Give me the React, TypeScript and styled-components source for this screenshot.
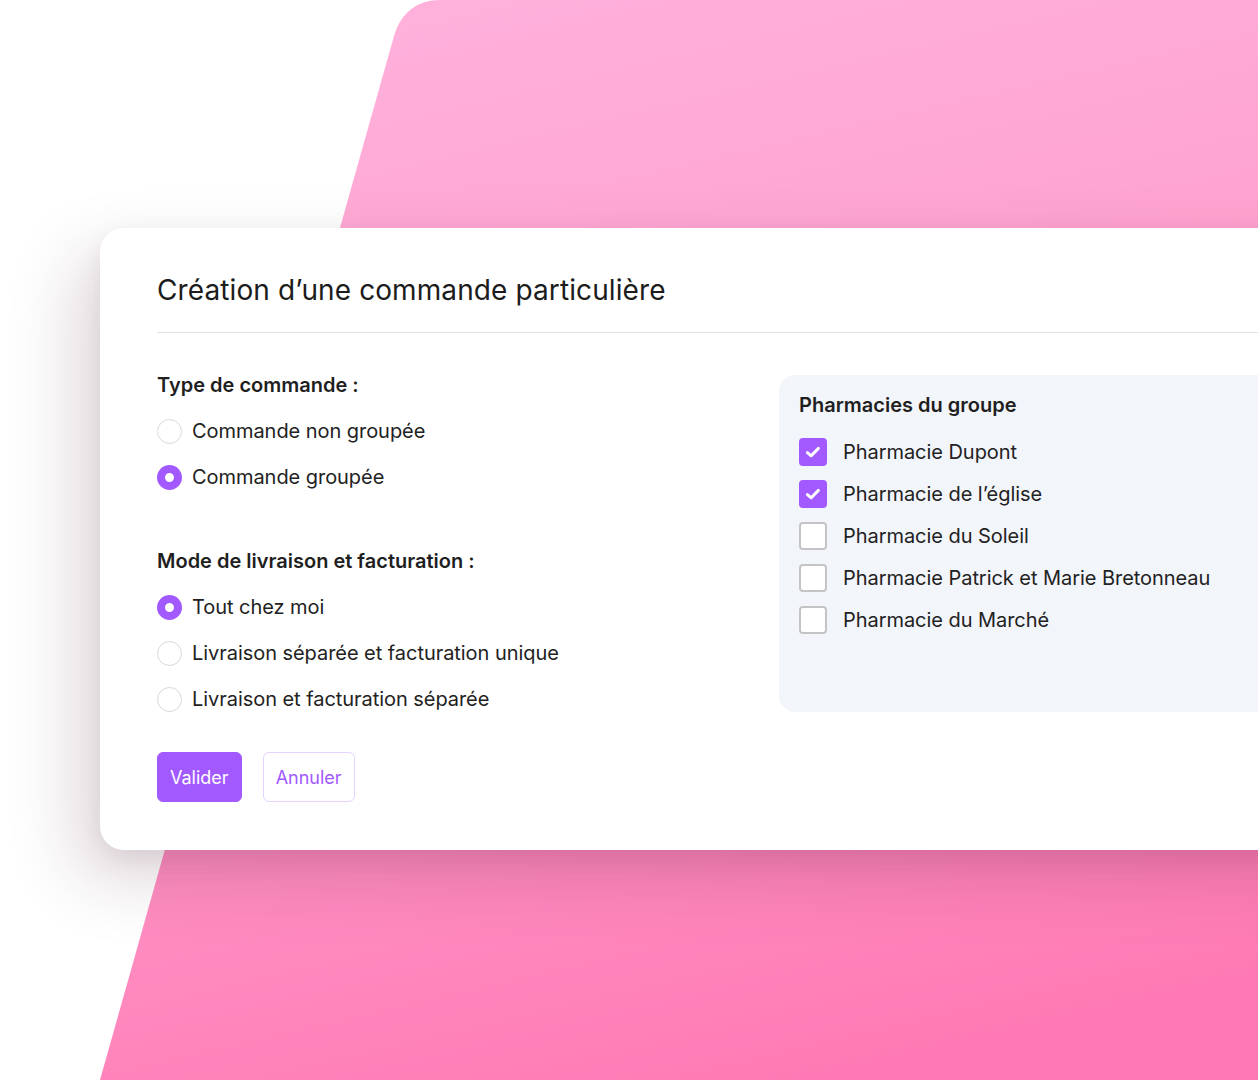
import * as React from 'react';
import styled, { createGlobalStyle } from 'styled-components';

const GlobalStyle = createGlobalStyle`
  html, body {
    margin: 0;
    padding: 0;
    background: #ffffff;
  }
  body {
    font-family: Inter, "Noto Sans", "Liberation Sans", sans-serif;
    color: #1f1f1f;
    -webkit-font-smoothing: antialiased;
  }
`;

const PURPLE = '#a259ff';

const Stage = styled.div`
  position: relative;
  width: 1258px;
  height: 1080px;
  overflow: hidden;
  background: #ffffff;
  padding-top: 228px;
  padding-left: 100px;
  box-sizing: border-box;
`;

const BackdropSvg = styled.svg`
  position: absolute;
  inset: 0;
  width: 1258px;
  height: 1080px;
  z-index: 0;
`;

const Card = styled.section`
  position: relative;
  z-index: 1;
  width: 1300px;
  height: 622px;
  box-sizing: border-box;
  background: #ffffff;
  border-radius: 24px;
  padding: 45px 0 0 57px;
  box-shadow: -24px 28px 70px rgba(60, 10, 40, 0.16), 0 10px 24px rgba(60, 10, 40, 0.08);
`;

const Header = styled.header`
  padding-bottom: 25px;
  border-bottom: 1.5px solid #e3e3e3;
`;

const Title = styled.h1`
  margin: 0;
  font-size: 28px;
  line-height: 34px;
  font-weight: 400;
  color: #1c1c1c;
  letter-spacing: 0.1px;
`;

const Body = styled.div`
  display: grid;
  grid-template-columns: 622px 1fr;
  padding-top: 40px;
`;

const FormColumn = styled.div`
  display: flex;
  flex-direction: column;
`;

const Fieldset = styled.div`
  display: flex;
  flex-direction: column;
  gap: 22px;
  & + & {
    margin-top: 60px;
  }
`;

const GroupLabel = styled.h2`
  margin: 0;
  font-size: 20px;
  line-height: 24px;
  font-weight: 600;
  color: #1f1f1f;
`;

const Option = styled.label`
  display: flex;
  align-items: center;
  gap: 10px;
  height: 24px;
  font-size: 20px;
  line-height: 24px;
  color: #222222;
  letter-spacing: -0.05px;
`;

const Radio = styled.span<{ $checked?: boolean }>`
  width: 25px;
  height: 25px;
  margin: -0.5px 0;
  box-sizing: border-box;
  border-radius: 50%;
  flex-shrink: 0;
  background: #ffffff;
  border: ${(p) => (p.$checked ? `8px solid ${PURPLE}` : '1.8px solid #d9d9d9')};
`;

const Actions = styled.div`
  display: flex;
  gap: 21px;
  margin-top: 41px;
`;

const Button = styled.button<{ $variant?: 'primary' | 'ghost' }>`
  height: 50px;
  box-sizing: border-box;
  padding: 0 12px;
  border-radius: 6px;
  font-family: inherit;
  font-size: 18px;
  cursor: pointer;
  background: ${(p) => (p.$variant === 'ghost' ? '#ffffff' : PURPLE)};
  color: ${(p) => (p.$variant === 'ghost' ? PURPLE : '#ffffff')};
  border: 1.5px solid ${(p) => (p.$variant === 'ghost' ? '#e5d4ff' : PURPLE)};
`;

const Panel = styled.aside`
  margin-top: 2px;
  height: 337px;
  box-sizing: border-box;
  background: #f2f5fa;
  border-radius: 16px;
  padding: 18px 20px;
  display: flex;
  flex-direction: column;
  gap: 14px;
`;

const PanelTitle = styled.h2`
  margin: 0 0 7px;
  font-size: 20px;
  line-height: 24px;
  font-weight: 600;
  color: #1f1f1f;
`;

const CheckRow = styled.label`
  display: flex;
  align-items: center;
  gap: 16px;
  font-size: 20px;
  line-height: 28px;
  color: #222222;
  letter-spacing: -0.05px;
`;

const Checkbox = styled.span<{ $checked?: boolean }>`
  width: 28px;
  height: 28px;
  box-sizing: border-box;
  border-radius: 4px;
  flex-shrink: 0;
  display: flex;
  align-items: center;
  justify-content: center;
  background: ${(p) => (p.$checked ? PURPLE : '#ffffff')};
  border: 2px solid ${(p) => (p.$checked ? PURPLE : '#c4c4c4')};
`;

const typeOptions = [
  { label: 'Commande non groupée', checked: false },
  { label: 'Commande groupée', checked: true },
];

const modeOptions = [
  { label: 'Tout chez moi', checked: true },
  { label: 'Livraison séparée et facturation unique', checked: false },
  { label: 'Livraison et facturation séparée', checked: false },
];

const pharmacies = [
  { label: 'Pharmacie Dupont', checked: true },
  { label: 'Pharmacie de l’église', checked: true },
  { label: 'Pharmacie du Soleil', checked: false },
  { label: 'Pharmacie Patrick et Marie Bretonneau', checked: false },
  { label: 'Pharmacie du Marché', checked: false },
];

function Check() {
  return (
    <svg width="20" height="20" viewBox="0 0 20 20" fill="none">
      <path d="M4.4 10.6 L8.2 13.8 L15.4 6.4" stroke="#ffffff" strokeWidth="3" strokeLinecap="round" strokeLinejoin="round" />
    </svg>
  );
}

function Backdrop() {
  return (
    <BackdropSvg viewBox="0 0 1258 1080" aria-hidden="true">
      <defs>
        <linearGradient id="pinkFill" x1="0.35" y1="0" x2="0.6" y2="1">
          <stop offset="0" stopColor="#ffb0db" />
          <stop offset="0.5" stopColor="#ff9ccb" />
          <stop offset="1" stopColor="#ff7ab4" />
        </linearGradient>
      </defs>
      <path d="M440 0 H1258 V1080 H100 L394 36 C401 12 418 0 440 0 Z" fill="url(#pinkFill)" />
    </BackdropSvg>
  );
}

export default function App() {
  return (
    <>
      <GlobalStyle />
      <Stage>
        <Backdrop />
        <Card>
          <Header>
            <Title>Création d’une commande particulière</Title>
          </Header>
          <Body>
            <FormColumn>
              <Fieldset>
                <GroupLabel>Type de commande :</GroupLabel>
                {typeOptions.map((o) => (
                  <Option key={o.label}>
                    <Radio $checked={o.checked} />
                    {o.label}
                  </Option>
                ))}
              </Fieldset>
              <Fieldset>
                <GroupLabel>Mode de livraison et facturation :</GroupLabel>
                {modeOptions.map((o) => (
                  <Option key={o.label}>
                    <Radio $checked={o.checked} />
                    {o.label}
                  </Option>
                ))}
              </Fieldset>
              <Actions>
                <Button>Valider</Button>
                <Button $variant="ghost">Annuler</Button>
              </Actions>
            </FormColumn>
            <Panel>
              <PanelTitle>Pharmacies du groupe</PanelTitle>
              {pharmacies.map((p) => (
                <CheckRow key={p.label}>
                  <Checkbox $checked={p.checked}>{p.checked && <Check />}</Checkbox>
                  {p.label}
                </CheckRow>
              ))}
            </Panel>
          </Body>
        </Card>
      </Stage>
    </>
  );
}
